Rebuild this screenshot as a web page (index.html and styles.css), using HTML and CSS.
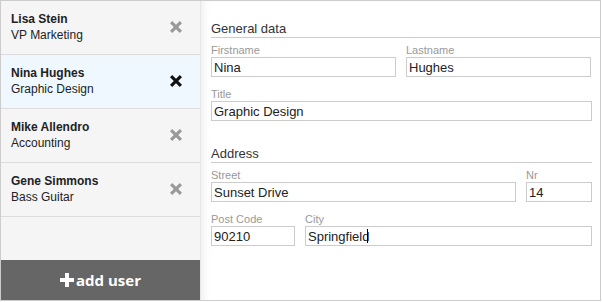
FILE: index.html
```html
<!DOCTYPE html>
<html lang="en">
<head>
  <meta charset="UTF-8" />
  <title>Users</title>
  <link rel="stylesheet" href="styles.css">
</head>
<body>
  <div class="app">
    <div class="sidebar">
      <ul class="users">
        <li class="user">
          <div class="info"><div class="name">Lisa Stein</div><div class="role">VP Marketing</div></div>
          <svg class="remove" viewBox="0 0 12 12"><path d="M2.2 0 6 3.8 9.8 0 12 2.2 8.2 6 12 9.8 9.8 12 6 8.2 2.2 12 0 9.8 3.8 6 0 2.2Z"/></svg>
        </li>
        <li class="user selected">
          <div class="info"><div class="name">Nina Hughes</div><div class="role">Graphic Design</div></div>
          <svg class="remove" viewBox="0 0 12 12"><path d="M2.2 0 6 3.8 9.8 0 12 2.2 8.2 6 12 9.8 9.8 12 6 8.2 2.2 12 0 9.8 3.8 6 0 2.2Z"/></svg>
        </li>
        <li class="user">
          <div class="info"><div class="name">Mike Allendro</div><div class="role">Accounting</div></div>
          <svg class="remove" viewBox="0 0 12 12"><path d="M2.2 0 6 3.8 9.8 0 12 2.2 8.2 6 12 9.8 9.8 12 6 8.2 2.2 12 0 9.8 3.8 6 0 2.2Z"/></svg>
        </li>
        <li class="user">
          <div class="info"><div class="name">Gene Simmons</div><div class="role">Bass Guitar</div></div>
          <svg class="remove" viewBox="0 0 12 12"><path d="M2.2 0 6 3.8 9.8 0 12 2.2 8.2 6 12 9.8 9.8 12 6 8.2 2.2 12 0 9.8 3.8 6 0 2.2Z"/></svg>
        </li>
      </ul>
      <button class="add">
        <svg class="plus" viewBox="0 0 14 14"><path d="M5 0h4v5h5v4H9v5H5V9H0V5h5Z"/></svg>add user
      </button>
    </div>

    <div class="main">
      <h2 class="section first">General data</h2>
      <div class="row">
        <label class="field half"><span>Firstname</span><input type="text" value="Nina"></label>
        <label class="field half"><span>Lastname</span><input type="text" value="Hughes"></label>
      </div>
      <div class="row">
        <label class="field grow"><span>Title</span><input type="text" value="Graphic Design"></label>
      </div>

      <h2 class="section">Address</h2>
      <div class="row">
        <label class="field grow"><span>Street</span><input type="text" value="Sunset Drive"></label>
        <label class="field nr"><span>Nr</span><input type="text" value="14"></label>
      </div>
      <div class="row">
        <label class="field zip"><span>Post Code</span><input type="text" value="90210"></label>
        <label class="field grow"><span>City</span><input type="text" value="Springfield"><i class="caret"></i></label>
      </div>
    </div>
  </div>
</body>
</html>
```

FILE: styles.css
```css
* {
  box-sizing: border-box;
}

body {
  margin: 0;
  font-family: 'Liberation Sans', Arial, sans-serif;
  background: #fff;
}

.app {
  display: flex;
  width: 601px;
  height: 301px;
  border: 1px solid #ccc;
}

.sidebar {
  width: 200px;
  display: flex;
  flex-direction: column;
  background: #f5f5f5;
  border-right: 1px solid #e6e6e6;
}

.users {
  list-style: none;
  margin: 0;
  padding: 0;
  flex: 1;
}

.user {
  display: flex;
  align-items: center;
  height: 54px;
  padding: 0 0 1px 10px;
  border-bottom: 1px solid #dcdcdc;
  color: #222;
  font-size: 12px;
}

.user.selected {
  background: #f0f8ff;
}

.info {
  flex: 1;
}

.name {
  font-weight: bold;
  line-height: 16px;
}

.role {
  line-height: 17px;
}

.remove {
  width: 12px;
  height: 12px;
  margin-right: 18px;
  fill: #999;
}

.selected .remove {
  fill: #111;
}

.add {
  height: 40px;
  border: none;
  background: #666;
  color: #fff;
  font-family: 'Open Sans', sans-serif;
  font-weight: bold;
  font-size: 15px;
  display: flex;
  align-items: center;
  justify-content: center;
  gap: 2px;
  padding: 0 0 1px;
  cursor: pointer;
}

.plus {
  width: 14px;
  height: 14px;
  fill: #fff;
}

.main {
  flex: 1;
  padding: 20px 8px 0 10px;
  box-shadow: inset 8px 0 9px -6px rgba(0, 0, 0, 0.07);
}

.section {
  margin: 0;
  font-size: 13px;
  font-weight: normal;
  line-height: 16px;
  color: #333;
  border-bottom: 1px solid #ccc;
}

.section.first {
  margin-right: -8px;
}

.section:not(.first) {
  margin-top: 25px;
}

.row {
  display: flex;
  gap: 10px;
  margin-top: 6px;
}

.row + .row {
  margin-top: 11px;
}

.field {
  display: flex;
  flex-direction: column;
  position: relative;
}

.field span {
  font-size: 11px;
  line-height: 13px;
  color: #999;
}

.field input {
  width: 100%;
  height: 20px;
  margin: 0;
  padding: 0 2px;
  border: 1px solid #ccc;
  font-family: 'Liberation Sans', Arial, sans-serif;
  font-size: 13px;
  color: #222;
  outline: none;
}

.half {
  width: 185px;
}

.grow {
  flex: 1;
}

.nr {
  width: 66px;
}

.zip {
  width: 84px;
}

.caret {
  position: absolute;
  left: 62px;
  top: 16px;
  width: 1px;
  height: 14px;
  background: #000;
}
```
